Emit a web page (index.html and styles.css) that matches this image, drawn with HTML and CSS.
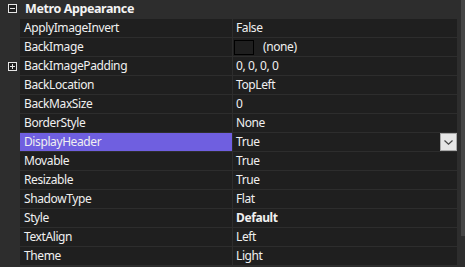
FILE: index.html
```html
<!DOCTYPE html>
<html lang="en">
<head>
  <meta charset="UTF-8" />
  <title>Property Grid</title>
  <link rel="stylesheet" href="styles.css">
</head>
<body>
  <div class="frame">
    <div class="grid">
      <div class="category">
        <span class="margin"><span class="toggle minus"></span></span>
        <span class="category-name">Metro Appearance</span>
      </div>

      <div class="row"><span class="margin"></span><span class="name">ApplyImageInvert</span><span class="value">False</span></div>
      <div class="row"><span class="margin"></span><span class="name">BackImage</span><span class="value"><span class="swatch"></span>(none)</span></div>
      <div class="row"><span class="margin"><span class="toggle plus"></span></span><span class="name">BackImagePadding</span><span class="value">0, 0, 0, 0</span></div>
      <div class="row"><span class="margin"></span><span class="name">BackLocation</span><span class="value">TopLeft</span></div>
      <div class="row"><span class="margin"></span><span class="name">BackMaxSize</span><span class="value">0</span></div>
      <div class="row"><span class="margin"></span><span class="name">BorderStyle</span><span class="value">None</span></div>
      <div class="row selected">
        <span class="margin"></span><span class="name">DisplayHeader</span>
        <span class="value">True
          <span class="dropdown">
            <svg width="9" height="5" viewBox="0 0 9 5"><path d="M0.5 0.5 L4.5 4.2 L8.5 0.5" fill="none" stroke="#444" stroke-width="1.2"/></svg>
          </span>
        </span>
      </div>
      <div class="row"><span class="margin"></span><span class="name">Movable</span><span class="value">True</span></div>
      <div class="row"><span class="margin"></span><span class="name">Resizable</span><span class="value">True</span></div>
      <div class="row"><span class="margin"></span><span class="name">ShadowType</span><span class="value">Flat</span></div>
      <div class="row"><span class="margin"></span><span class="name">Style</span><span class="value bold">Default</span></div>
      <div class="row"><span class="margin"></span><span class="name">TextAlign</span><span class="value">Left</span></div>
      <div class="row"><span class="margin"></span><span class="name">Theme</span><span class="value">Light</span></div>
    </div>
    <div class="scroll"><div class="thumb"></div></div>
  </div>
</body>
</html>
```

FILE: styles.css
```css
html, body {
  margin: 0;
  background: #2d2d2d;
}
body {
  font-family: "Noto Sans", "Segoe UI", sans-serif;
  font-size: 12px;
  letter-spacing: -0.4px;
  color: #f0f0f0;
  width: 465px;
  height: 267px;
  overflow: hidden;
}
.frame {
  display: flex;
  height: 267px;
}
.grid {
  width: 457px;
  margin-right: 4px;
}
.category {
  display: flex;
  height: 19px;
  line-height: 18px;
}
.category-name {
  font-weight: bold;
  font-size: 12.5px;
  padding-left: 5px;
  color: #f4f4f4;
}
.row {
  display: flex;
  height: 18px;
  line-height: 18px;
  margin-bottom: 1px;
}
.margin {
  width: 20px;
  flex: none;
  position: relative;
}
.name {
  width: 208px;
  padding-left: 4px;
  margin-right: 1px;
  background: #1f1f1f;
  white-space: nowrap;
}
.value {
  width: 221px;
  padding-left: 3px;
  background: #1f1f1f;
  display: flex;
  align-items: center;
  white-space: nowrap;
}
.bold {
  font-weight: bold;
}
.selected .name {
  background: #6f5fe0;
}
.toggle {
  position: absolute;
  left: 8px;
  top: 4px;
  width: 7px;
  height: 7px;
  border: 1px solid #e6e6e6;
  background: #1f1f1f;
}
.row .toggle {
  top: 5px;
}
.toggle::before {
  content: "";
  position: absolute;
  left: 1px;
  top: 3px;
  width: 5px;
  height: 1px;
  background: #e6e6e6;
}
.plus::after {
  content: "";
  position: absolute;
  left: 3px;
  top: 1px;
  width: 1px;
  height: 5px;
  background: #e6e6e6;
}
.swatch {
  width: 18px;
  height: 13px;
  border: 1px solid #000;
  background: #1f1f1f;
  margin-left: -2px;
  margin-right: 9px;
}
.dropdown {
  margin-left: auto;
  width: 15px;
  height: 16px;
  border: 1px solid #a8a8a8;
  background: #e6e6e6;
  display: flex;
  align-items: center;
  justify-content: center;
}
.scroll {
  width: 4px;
  background: #2d2d2d;
}
.thumb {
  height: 236px;
  background: #454545;
}
```
